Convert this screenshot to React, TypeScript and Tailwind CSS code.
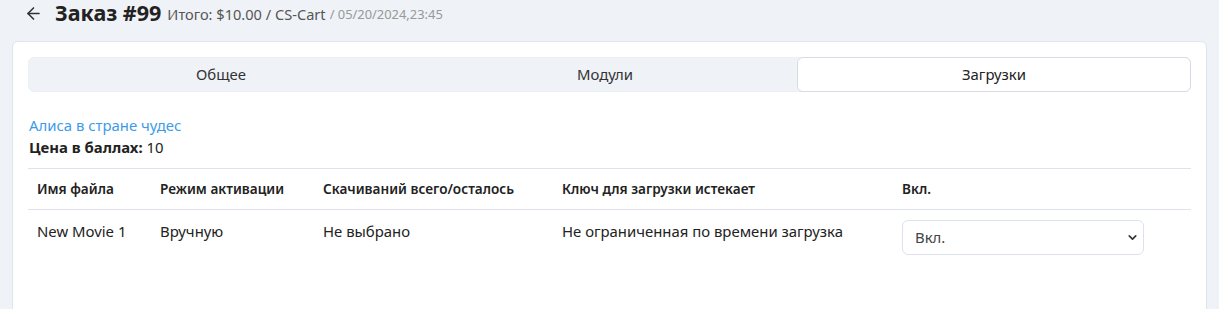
import { ArrowLeft, ChevronDown } from "lucide-react";

const tabs = ["Общее", "Модули", "Загрузки"];

export default function App() {
  return (
    <div
      className="min-h-[309px] bg-[#eff2f7] text-[#222] text-[14.9px]"
      style={{ fontFamily: '"Noto Sans", "Open Sans", sans-serif' }}
    >
      {/* Header */}
      <div className="flex items-center h-[26px] pl-[24px]">
        <ArrowLeft className="w-[19px] h-[19px] text-[#333]" strokeWidth={2} />
        <h1 className="ml-[12px] text-[21.5px] font-bold text-[#222] leading-none">Заказ #99</h1>
        <span className="ml-[6px] text-[14.6px] text-[#555] leading-none pt-[3px]">
          Итого: $10.00 / CS-Cart
        </span>
        <span className="ml-[4px] text-[12.9px] text-[#999] leading-none pt-[3px]">
          / 05/20/2024,23:45
        </span>
      </div>

      {/* Card */}
      <div className="mx-[12px] mt-[15px] bg-white border border-[#dfe5ee] rounded-[6px] px-[15px] pt-[15px] pb-[60px]">
        {/* Tabs */}
        <div className="grid grid-cols-[384px_384px_1fr] bg-[#eff2f7] rounded-[6px] h-[35px] border border-[#eceff4]">
          {tabs.map((t, i) => (
            <div
              key={t}
              className={
                i === 2
                  ? "flex items-center justify-center bg-white border border-[#d6dce6] rounded-[6px] text-[#222] -my-px -mr-px"
                  : "flex items-center justify-center text-[#333]"
              }
            >
              {t}
            </div>
          ))}
        </div>

        <div className="mt-[23px] pl-[1px]">
          <a className="text-[#3d9be9] leading-[20px] block">Алиса в стране чудес</a>
          <div className="leading-[20px] mt-[2px]">
            <span className="font-bold">Цена в баллах:</span> 10
          </div>
        </div>

        {/* Table */}
        <div className="mt-[11px] border-t border-[#dde3ec]">
          <div className="flex h-[41px] items-center border-b border-[#dde3ec] font-semibold text-[13.6px] text-[#222] pt-[1px]">
            <div className="w-[132px] pl-[9px]">Имя файла</div>
            <div className="w-[163px]">Режим активации</div>
            <div className="w-[239px]">Скачиваний всего/осталось</div>
            <div className="w-[340px]">Ключ для загрузки истекает</div>
            <div>Вкл.</div>
          </div>
          <div className="flex pt-[10px] text-[#222]">
            <div className="w-[132px] pl-[9px]">New Movie 1</div>
            <div className="w-[163px]">Вручную</div>
            <div className="w-[239px]">Не выбрано</div>
            <div className="w-[340px]">Не ограниченная по времени загрузка</div>
            <div className="w-[242px] h-[35px] border border-[#dde3ec] rounded-[6px] flex items-center justify-between pl-[12px] pr-[4px] text-[#444]">
              <span>Вкл.</span>
              <ChevronDown className="w-[13px] h-[13px] text-[#333]" strokeWidth={3} />
            </div>
          </div>
        </div>
      </div>
    </div>
  );
}
